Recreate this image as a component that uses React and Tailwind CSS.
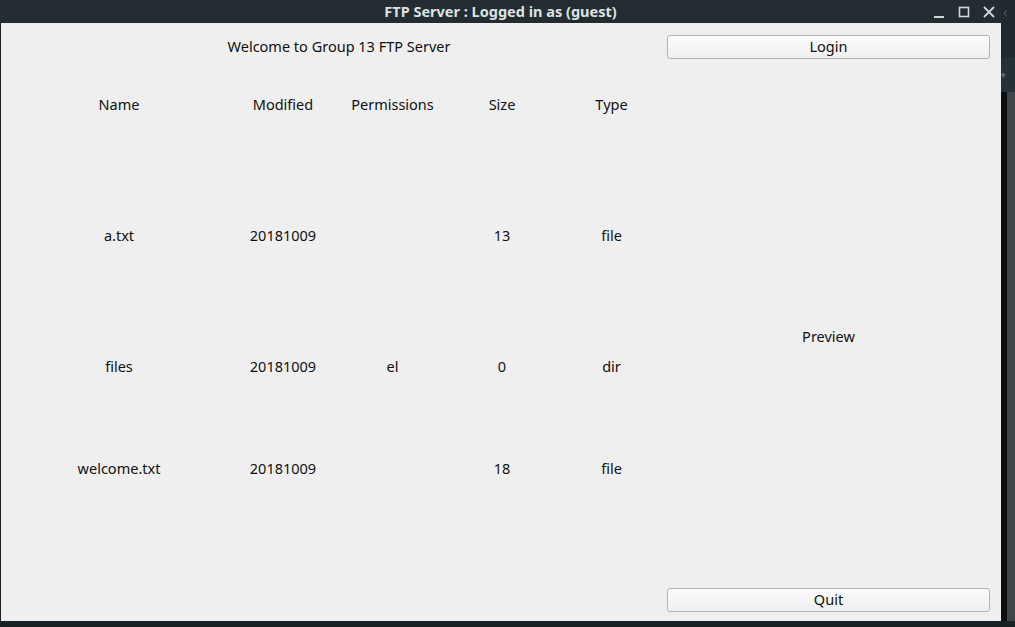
import React from 'react';

const rows = [
  { name: 'a.txt', modified: '20181009', perm: '', size: '13', type: 'file', mt: 'mt-[101px]' },
  { name: 'files', modified: '20181009', perm: 'el', size: '0', type: 'dir', mt: 'mt-[101px]' },
  { name: 'welcome.txt', modified: '20181009', perm: '', size: '18', type: 'file', mt: 'mt-[72px]' },
];

// 一行表格
const Row = ({ cells, className = '' }) => (
  <div className={`flex h-[30px] items-center pl-[9px] ${className}`}>
    <div className="w-[218px] text-center">{cells[0]}</div>
    <div className="w-[110px] text-center">{cells[1]}</div>
    <div className="w-[109px] text-center">{cells[2]}</div>
    <div className="w-[110px] text-center">{cells[3]}</div>
    <div className="w-[109px] text-center">{cells[4]}</div>
  </div>
);

const QtButton = ({ children }) => (
  <button className="h-[24px] w-[323px] rounded-[3px] border border-[#b2b2b2] bg-gradient-to-b from-[#fcfcfc] to-[#efefef] pb-[2px] text-[14.5px] text-[#111]">
    {children}
  </button>
);

const TitleBar = () => (
  <div className="relative flex h-[23px] items-center justify-center bg-[#222c31]">
    <span className="text-[14.5px] font-bold text-[#dde2e4]">FTP Server : Logged in as (guest)</span>
    <div className="absolute right-0 top-0 flex h-[23px] items-center">
      <svg width="14" height="14" viewBox="0 0 14 14" className="mr-[11px]">
        <rect x="2" y="11" width="10" height="2" fill="#cfd6d9" />
      </svg>
      <svg width="14" height="14" viewBox="0 0 14 14" className="mr-[11px]">
        <rect x="2.5" y="2.5" width="9" height="9" fill="none" stroke="#cfd6d9" strokeWidth="1.6" />
      </svg>
      <svg width="14" height="14" viewBox="0 0 14 14" className="mr-[5px]">
        <path d="M2 2 L12 12 M12 2 L2 12" stroke="#cfd6d9" strokeWidth="1.8" />
      </svg>
    </div>
  </div>
);

export default function App() {
  return (
    <div
      className="flex h-[627px] w-[1015px] flex-col bg-[#1a2226] text-[#111]"
      style={{ fontFamily: '"Noto Sans", "Open Sans", sans-serif' }}
    >
      <div className="flex h-[621px]">
        {/* 主視窗 */}
        <div className="flex w-[1001px] flex-col">
          <TitleBar />
          <div className="flex flex-1">
            <div className="w-px bg-[#1a2226]" />
            <div className="flex flex-1 bg-[#efefef] text-[14.5px]">
              {/* 左欄 */}
              <div className="flex w-[666px] flex-col pt-[12px]">
                <div className="flex h-[24px] items-center justify-center pl-[10px]">
                  Welcome to Group 13 FTP Server
                </div>
                <Row className="mt-[31px]" cells={['Name', 'Modified', 'Permissions', 'Size', 'Type']} />
                {rows.map(r => (
                  <Row key={r.name} className={r.mt} cells={[r.name, r.modified, r.perm, r.size, r.type]} />
                ))}
              </div>
              {/* 右欄 */}
              <div className="flex w-[323px] flex-col pb-[9px] pt-[12px]">
                <QtButton>Login</QtButton>
                <div className="flex flex-1 items-center justify-center pt-[27px]">Preview</div>
                <QtButton>Quit</QtButton>
              </div>
            </div>
          </div>
        </div>
        {/* 背景視窗邊緣 */}
        <div className="flex w-[14px] flex-col">
          <div className="flex h-[23px] items-center bg-[#1f292e] pl-[2px] text-[14px] text-[#4f5a5f]">‹</div>
          <div className="h-[34px] bg-[#1f292e]" />
          <div className="flex h-[35px] items-center bg-[#263136] text-[9px] text-[#6a7478]">▾</div>
          <div className="flex flex-1">
            <div className="w-[6px] bg-[#0b0f11]" />
            <div className="flex-1 bg-[#3d4649]" />
          </div>
        </div>
      </div>
      <div className="flex-1 bg-[#192125]" />
    </div>
  );
}
